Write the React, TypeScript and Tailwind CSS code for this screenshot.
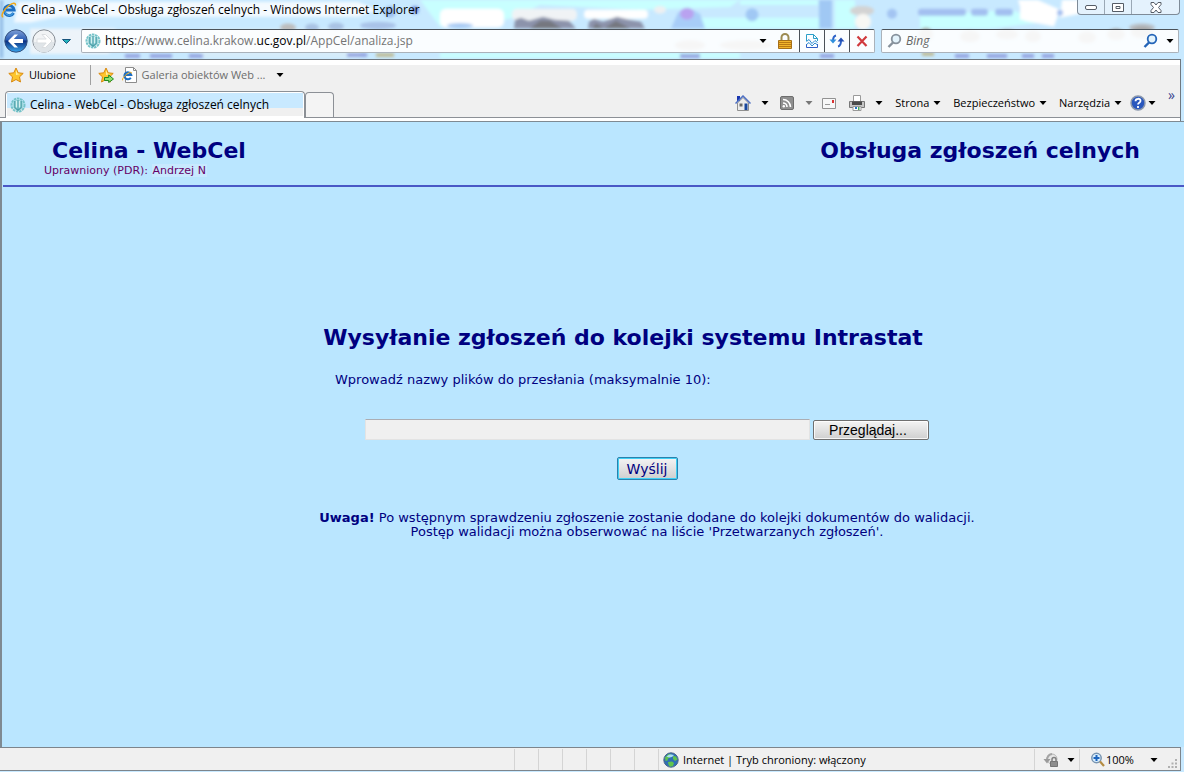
import { useState } from 'react';

const separators = [0, 1, 2, 3, 4, 5];

function Caret({ className = 'text-black' }: { className?: string }) {
  return (
    <svg className={`h-1 w-2 shrink-0 ${className}`} viewBox="0 0 8 4" fill="currentColor">
      <path d="M0.5 0h7L4 4z" />
    </svg>
  );
}

function ExplorerIcon() {
  return (
    <svg className="h-4 w-4 shrink-0" viewBox="0 0 16 16" fill="none">
      <path d="M12.6 11a5 5 0 1 1 .6-3H5" stroke="#1d6fc4" strokeWidth="2.8" />
      <path d="M12.2 11.3a4.7 4.7 0 0 1-8.3-1.2" stroke="#53b2ea" strokeWidth="1" />
      <path d="M2.2 15C-1 14.500 3 7 8 3.500c3.500-2.500 6.800-3.200 6.500 0" stroke="#f0a818" strokeWidth="1.500" />
    </svg>
  );
}

function EmblemIcon() {
  return (
    <svg className="h-4 w-4 shrink-0" viewBox="0 0 16 16" fill="none">
      <circle cx="8" cy="8" r="6.500" stroke="#74c3c9" strokeWidth="2" strokeDasharray="2.500 0.700" />
      <circle cx="8" cy="8" r="5" fill="#a9dfe2" stroke="#93d0d4" strokeWidth="0.800" />
      <path d="M6.800 4v6M9.200 4v6" stroke="#e9f8f8" />
      <path d="M4.800 4v6.500L8 13.500l3.200-3V4M8 3v10" stroke="#4a9fa9" strokeWidth="1.200" />
    </svg>
  );
}

function PageIcon() {
  return (
    <svg className="h-4 w-4 shrink-0" viewBox="0 0 16 16" fill="none">
      <path d="M3.500.5h8l3 3v12h-11z" fill="#fff" stroke="#8c8c8c" />
      <path d="M11.500.5v3h3" stroke="#8c8c8c" />
      <path d="M8.800 10.800A3.500 3.500 0 1 1 9.300 8H3.500" stroke="#1d6fc4" strokeWidth="2" />
      <path d="M1 13.500c-2-1 2-5.500 5.500-7.500 2-1 3.500-1 3 .5" stroke="#f0a818" />
    </svg>
  );
}

function StarIcon({ withArrow = false }: { withArrow?: boolean }) {
  return (
    <svg className="h-4 w-4 shrink-0" viewBox="0 0 16 16">
      <path
        d="m8 1 2.200 4.800 5 .6-3.700 3.500 1 5.100L8 12.500 3.500 15l1-5.100L.8 6.400l5-.6z"
        fill="#fdc62e"
        stroke="#d9880f"
      />
      <path d="m8 3 1.500 3.500 3 .4L8 8z" fill="#fff0a4" />
      {withArrow && (
        <path d="M6.500 10.500h4.200V8L15.500 12l-4.800 3.500V13.500H6.500z" fill="#8fe070" stroke="#1f8a21" />
      )}
    </svg>
  );
}

function BackIcon() {
  return (
    <svg className="h-6 w-6" viewBox="0 0 24 24">
      <defs>
        <linearGradient id="back" x1="0" y1="0" x2="0" y2="1">
          <stop offset="0" stopColor="#7f9fd6" />
          <stop offset="0.45" stopColor="#2a5db5" />
          <stop offset="0.5" stopColor="#0b2f80" />
          <stop offset="1" stopColor="#3aa7ee" />
        </linearGradient>
      </defs>
      <circle cx="12" cy="12" r="11.200" fill="url(#back)" stroke="#35507e" />
      <path d="M4 12l6.500-6.500h3.500L9.800 10H19v4H9.800l4.200 4.500h-3.500z" fill="#fff" />
    </svg>
  );
}

function ForwardIcon() {
  return (
    <svg className="h-6 w-6" viewBox="0 0 24 24">
      <circle cx="12" cy="12" r="11.200" fill="#f1f3f5" stroke="#858c94" />
      <path d="M1.500 13a10.500 10.500 0 0 0 21 0z" fill="#dfe4e8" />
      <path d="M20 12l-6.500-6.500H10l4.200 4.500H5v4h9.200L10 18.500h3.500z" fill="#fff" stroke="#dadde0" />
    </svg>
  );
}

function LockIcon() {
  return (
    <svg className="h-4 w-4" viewBox="0 0 16 16">
      <path d="M4.500 8V4.500a3.500 3.500 0 0 1 7 0V8" fill="none" stroke="#9c8b52" strokeWidth="2" />
      <path d="M1.500 7.500h13v8h-13z" fill="#f2b52c" stroke="#a5701a" />
      <path d="M2 9.500h12M2 11.500h12M2 13.500h12" stroke="#b97a14" />
    </svg>
  );
}

function CompatIcon() {
  return (
    <svg className="h-4 w-4" viewBox="0 0 16 16" fill="none">
      <path d="M2.500 8V1.500h7l4 4V8M9.500 1.500v4h4" stroke="#2a9fc9" />
      <path d="M2.500 11v3.500h11V11" stroke="#2e5fc5" />
      <path d="m2.500 8.500 2.500-2 3 4 3-3 2.500 2M2.500 11.500l2.500-2 3 3.500 3-3 2.500 2" stroke="#2d8cd0" />
    </svg>
  );
}

function RefreshIcon() {
  return (
    <svg className="h-4 w-4" viewBox="0 0 16 16" fill="none">
      <path d="M7 2.500C4.500 3 4 5 4 8M9 13.500c2.500-.5 3-2.500 3-6" stroke="#2c62c8" strokeWidth="2" />
      <path d="M.5 6.500h7L4 10.500z" fill="#2e8fdc" />
      <path d="M8.500 8.500h7L12 4.500z" fill="#2450b4" />
    </svg>
  );
}

function HomeIcon() {
  return (
    <svg className="h-4 w-4" viewBox="0 0 16 16">
      <path d="M2 1h3v5H2z" fill="#1935b0" />
      <path d="M2.500 8v7.500h11V8L8 2.500z" fill="#ececec" stroke="#8f8f8f" />
      <path d="M.5 8.500 8 1l7.500 7.500" fill="none" stroke="#4e70c4" strokeWidth="1.500" />
      <path d="M4.500 8.500h3v3h-3z" fill="#686868" />
      <path d="M9.500 8.500h3v6.500h-3z" fill="#18479e" />
    </svg>
  );
}

function FeedIcon() {
  return (
    <svg className="h-4 w-4" viewBox="0 0 16 16" fill="none">
      <rect x="1.500" y="1.500" width="13" height="13" rx="1.500" fill="#8f8f8f" stroke="#6d6d6d" />
      <path d="M4 4.500A7.500 7.500 0 0 1 11.500 12M4 8a4 4 0 0 1 4 4" stroke="#fff" strokeWidth="1.600" />
      <circle cx="4.800" cy="11.300" r="1.200" fill="#fff" />
    </svg>
  );
}

function MailIcon() {
  return (
    <svg className="h-4 w-4" viewBox="0 0 16 16">
      <path d="M1.500 3.500h13v10h-13z" fill="#f8f8f8" stroke="#929292" />
      <path d="M11 5h2v3h-2z" fill="#d93232" />
      <path d="M4 9.500h5" stroke="#9b9b9b" />
    </svg>
  );
}

function PrinterIcon() {
  return (
    <svg className="h-4 w-4" viewBox="0 0 16 16">
      <path d="M4.500.5h7V7h-7z" fill="#fff" stroke="#9a9a9a" />
      <path d="M.5 6.500h15v6H.5z" fill="#c5c5c5" stroke="#777" />
      <path d="M3 6.500h10v3.500H3z" fill="#4a4a4a" />
      <path d="M4 11.500h8v4H4z" fill="#fff" stroke="#999" />
      <path d="M6 12h2v2H6z" fill="#2577c8" />
      <path d="M9 12h1.500v3H9z" fill="#49a95b" />
    </svg>
  );
}

function HelpIcon() {
  return (
    <svg className="h-4 w-4" viewBox="0 0 16 16" fill="none">
      <circle cx="8" cy="8" r="7" fill="#2957bd" stroke="#8b98ad" strokeWidth="1.500" />
      <path d="M5.500 6.200C5.500 3 10.800 3 10.500 6c-.1 1.800-2.500 1.700-2.500 3.500M8 11v2" stroke="#fff" strokeWidth="1.800" />
    </svg>
  );
}

function GlassIcon({ flip = false, color = '#86919c' }: { flip?: boolean; color?: string }) {
  return (
    <svg className="h-4 w-4 shrink-0" viewBox="0 0 16 16" fill="none">
      {flip ? (
        <g>
          <circle cx="6.500" cy="6" r="4.700" fill="#d9efff" stroke="#7894b0" strokeWidth="1.500" />
          <path d="M6.500 3v6M3.500 6h6" stroke="#1d64bd" strokeWidth="2" />
          <path d="m10 9.500 4 4.500" stroke="#b48c42" strokeWidth="2.200" />
        </g>
      ) : (
        <g stroke={color}>
          <circle cx="10" cy="6" r="4.300" fill="#e3f3fc" strokeWidth="1.800" />
          <path d="m7 9.500-4.500 4.500" strokeWidth="2.400" />
        </g>
      )}
    </svg>
  );
}

function GlobeIcon() {
  return (
    <svg className="h-4 w-4 shrink-0" viewBox="0 0 16 16">
      <circle cx="8" cy="8" r="7.200" fill="#2f6eb5" stroke="#4b6788" />
      <path d="M2 5.500 5.500 2l3 .5-1 3-2.500 1-.5 2-2 .5zM10 4l3 .5 1.500 3L12 9l-2-2zM5 10l4-.5 2 1.500-1 3-3 .8-1.500-2z" fill="#60c54c" />
      <path d="M3.500 4.500C5.500 2 9 2 11 3l-2 2-3 .5z" fill="#a8ddf5" />
    </svg>
  );
}

function PrivacyIcon() {
  return (
    <svg className="h-4 w-4" viewBox="0 0 16 16" fill="none">
      <circle cx="9" cy="7" r="5" fill="#e6e6e6" stroke="#b5b5b5" />
      <path d="M4 8.500C4 5 6 2.500 9 2" stroke="#a5a5a5" strokeWidth="2" />
      <path d="M.5 7h7L4 11.500z" fill="#9b9b9b" />
      <path d="M7.500 9.500h7v5h-7z" fill="#8d8d8d" stroke="#747474" />
      <path d="M9 9.500v-2a2 2 0 0 1 4 0v2" stroke="#808080" strokeWidth="1.500" />
    </svg>
  );
}

// Blurred desktop seen through the glass window frame
function GlassBackdrop() {
  return (
    <svg className="absolute inset-0 h-full w-full" viewBox="0 0 1184 60" preserveAspectRatio="none">
      <defs>
        <filter id="soft">
          <feGaussianBlur stdDeviation="1.5" />
        </filter>
      </defs>
      <path d="M0 0h1184v60H0z" fill="#c8e9ff" />
      <g filter="url(#soft)">
        <path d="M420 0h320l-10 7-90 3-100-5-30 14-40 8h-30zM690 18h130v11H690zM740 0h78v5h-78zM835 0h20v29h-20zM920 16l90-6 40 12-60 7h-70zM440 54h300v5H440z" fill="#c8ffff" />
        <path d="M0 0h3v59H0z" fill="#8db7e2" />
        <path d="M18 2h340l20 8-20 7H60l-30 6H14z" fill="#f4faff" />
        <path d="M30 29h84l14 8-20 18H30z" fill="#edf4fa" />
        <path d="M200 29h160v30H200z" fill="#d6ecfa" />
        <rect x="440" y="9" width="64" height="19" rx="6" fill="#fff" />
        <rect x="512" y="9" width="65" height="12" rx="5" fill="#f0f3f5" />
        <rect x="584" y="10" width="64" height="9" rx="4" fill="#fff" />
        <path d="M1018 0h20l22 10-6 17-30-6zM1062 0h18v14l-20 4zM1020 8h30v12h-30z" fill="#fff" />
        <ellipse cx="660" cy="10" rx="6" ry="4" fill="#eef0f2" />
        <ellipse cx="862" cy="11" rx="12" ry="5" fill="#d3d3d3" />
        <ellipse cx="863" cy="22" rx="8" ry="8" fill="#f8f8f4" />
        <path d="m514 29 1-9 6-2 8 3 14-4 12 3 14 1 7 8zM588 29l1-7 5-3 9 3 14-5 12 3 12 2 4 7z" fill="#8c93ab" />
        <path d="m530 29 10-8 10 0 12 8zM592 29l4-5 8 5zM604 29l12-8 14 8z" fill="#74777f" />
        <path d="M671 29l7-16 10-5 12 6 5 15z" fill="#a8cdf8" />
        <ellipse cx="687" cy="14" rx="7" ry="6" fill="#b9a2f0" />
        <path d="M819 0h13v29h-13z" fill="#a0c8f4" />
        <circle cx="752" cy="15" r="6.500" fill="#a0c8f4" />
        <ellipse cx="460" cy="26" rx="13" ry="2.500" fill="#a9cbf4" />
        <rect x="918" y="9" width="48" height="7" rx="3" fill="#a3bff0" />
        <rect x="971" y="9" width="17" height="7" rx="3" fill="#a3bff0" />
        <rect x="995" y="9" width="18" height="7" rx="3" fill="#a3bff0" />
        <circle cx="892" cy="14" r="5" fill="#a3c4f2" />
        <circle cx="1060" cy="13" r="3" fill="#a3bff0" />
        <ellipse cx="288" cy="28" rx="8" ry="4" fill="#bdbdbd" />
        <ellipse cx="312" cy="28" rx="7" ry="4" fill="#a9c3e4" />
        <ellipse cx="336" cy="27" rx="8" ry="4" fill="#a9c3e4" />
        <ellipse cx="378" cy="26" rx="18" ry="4" fill="#a9c3e8" />
        <ellipse cx="1142" cy="28" rx="13" ry="4" fill="#b8bec4" />
        <path d="M125 55h15v4h-15zM150 55h22v4h-22zM189 55h14v4h-14zM347 54h20v4h-20zM680 55h20v4h-20zM820 55h14v4h-14zM955 55h14v4h-14zM987 55h20v4h-20zM1022 55h12v4h-12zM1042 55h12v4h-12z" fill="#94a4e0" />
        <path d="M376 54h18v4h-18zM922 53h12v4h-12z" fill="#c0bd9a" />
        <circle cx="415" cy="10" r="4" fill="#7795df" />
        <circle cx="390" cy="12" r="6" fill="#9cc0ef" />
        <g fill="#a8a8a8">
          <ellipse cx="690" cy="46" rx="15" ry="5" />
          <ellipse cx="746" cy="46" rx="26" ry="5" />
          <ellipse cx="926" cy="35" rx="7" ry="7" />
          <ellipse cx="970" cy="37" rx="10" ry="6" />
          <ellipse cx="1007" cy="35" rx="11" ry="5" />
          <ellipse cx="1033" cy="37" rx="8" ry="6" />
          <ellipse cx="1087" cy="38" rx="9" ry="6" />
          <ellipse cx="1116" cy="35" rx="9" ry="6" />
          <ellipse cx="1142" cy="33" rx="11" ry="6" />
        </g>
      </g>
    </svg>
  );
}

function WindowFrame() {
  return (
    <header className="relative shrink-0">
      <GlassBackdrop />
      <div className="relative flex h-[29px] items-start pl-px pr-1">
        <div className="flex flex-1 items-center gap-1 pt-0.5">
          <ExplorerIcon />
          <h1 className="text-[12px]">Celina - WebCel - Obsługa zgłoszeń celnych - Windows Internet Explorer</h1>
        </div>
        <div className="flex h-[15px] w-[103px] divide-x divide-[#9aa8b5] overflow-hidden rounded-b border border-t-0 border-[#7e8b98] bg-[#e4f2fd]">
          <button className="flex flex-1 items-center justify-center" aria-label="Minimalizuj">
            <span className="h-[5px] w-3 rounded-xs border border-[#555c66] bg-white" />
          </button>
          <button className="flex flex-1 items-center justify-center" aria-label="Maksymalizuj">
            <svg className="h-[9px] w-3" viewBox="0 0 12 9" fill="#fff" stroke="#555c66">
              <path d="M.5.5h11v8H.5zM4 3.500h4v2H4z" />
            </svg>
          </button>
          <button className="flex w-[47px] items-center justify-center" aria-label="Zamknij">
            <svg className="h-[11px] w-3" viewBox="0 0 12 11">
              <path d="M1 .5h3l2 2.500 2-2.500h3v2L8.500 5.500 11 8.500v2H8L6 8l-2 2.500H1v-2l2.500-3L1 2.500z" fill="#fff" stroke="#555c66" />
            </svg>
          </button>
        </div>
      </div>
      <div className="relative flex h-[30px] items-start pl-1 pr-[5px]">
        <button aria-label="Wstecz"><BackIcon /></button>
        <button className="ml-1" aria-label="Dalej"><ForwardIcon /></button>
        <button className="mt-2.5 ml-1.5 mr-2.5" aria-label="Ostatnie strony">
          <svg className="h-[5px] w-[9px]" viewBox="0 0 9 5"><path d="M.5.5h8l-4 4z" fill="#25b4bd" stroke="#17547c" /></svg>
        </button>
        <div className="flex h-6 flex-1 items-stretch rounded-xs border border-[#aab2ba] border-t-[#4b5259] bg-white/90">
          <div className="flex flex-1 items-center gap-1 pl-[3px]">
            <EmblemIcon />
            <div
              role="textbox"
              aria-label="Adres"
              contentEditable
              suppressContentEditableWarning
              className="flex-1 text-[12px] whitespace-nowrap text-[#747474] outline-none"
            >
              <span className="text-black">https</span>://www.celina.krakow.<span className="text-black">uc.gov.pl</span>/AppCel/analiza.jsp
            </div>
            <button aria-label="Historia adresów" className="px-1.5"><Caret /></button>
            <button className="mr-1.5" aria-label="Raport o zabezpieczeniach"><LockIcon /></button>
          </div>
          <button className="flex w-[25px] items-center justify-center border-l border-[#4b5259]" aria-label="Widok zgodności"><CompatIcon /></button>
          <button className="flex w-[25px] items-center justify-center border-l border-[#4b5259]" aria-label="Odśwież"><RefreshIcon /></button>
          <button className="flex w-[25px] items-center justify-center border-l border-[#4b5259]" aria-label="Zatrzymaj">
            <svg className="h-3 w-3" viewBox="0 0 12 12"><path d="m1.500 1.500 9 9.500M10.500 1.500l-9 9.500" stroke="#d03a3e" strokeWidth="2.200" /></svg>
          </button>
        </div>
        <div className="ml-1.5 flex h-6 w-[298px] items-center rounded-xs border border-[#aab2ba] border-t-[#4b5259] bg-white/90 pl-1">
          <GlassIcon />
          <input type="text" aria-label="Wyszukaj" placeholder="Bing" className="ml-1 min-w-0 flex-1 text-[12px] outline-none placeholder:text-[#666] placeholder:italic" />
          <button aria-label="Szukaj"><GlassIcon color="#2465b8" /></button>
          <button className="mr-1 ml-2" aria-label="Opcje wyszukiwania"><Caret /></button>
        </div>
      </div>
    </header>
  );
}

function CommandBar() {
  return (
    <div className="flex items-center pr-[5px] text-black">
      <button aria-label="Strona główna"><HomeIcon /></button>
      <button className="ml-2.5 flex h-4 items-center" aria-label="Opcje strony głównej"><Caret /></button>
      <button className="ml-2.5" aria-label="Źródła"><FeedIcon /></button>
      <button className="ml-2.5 flex h-4 items-center" aria-label="Opcje źródeł"><Caret className="text-[#777]" /></button>
      <button className="ml-2" aria-label="Poczta"><MailIcon /></button>
      <button className="ml-3" aria-label="Drukuj"><PrinterIcon /></button>
      <button className="ml-2.5 flex h-4 items-center" aria-label="Opcje drukowania"><Caret /></button>
      <button className="ml-3 flex items-center gap-1">Strona <Caret /></button>
      <button className="ml-3 flex items-center gap-1">Bezpieczeństwo <Caret /></button>
      <button className="ml-3 flex items-center gap-1">Narzędzia <Caret /></button>
      <button className="ml-2 flex items-center gap-0.5" aria-label="Pomoc"><HelpIcon /><Caret /></button>
      <button className="mb-4 ml-3 text-[14px] leading-3 text-[#37438f]" aria-label="Więcej">»</button>
    </div>
  );
}

function Toolbars() {
  return (
    <div className="shrink-0 bg-[#c8e9ff] pr-[3px]">
      <div className="border-t border-r border-[#6f7880] bg-white pt-[5px]">
        <div className="flex h-5 items-center bg-[#f0f0f0] pl-2">
          <button className="flex items-center gap-[5px]"><StarIcon />Ulubione</button>
          <span className="ml-3.5 h-5 border-l border-[#a0a0a0]" />
          <button className="ml-[7px]" aria-label="Dodaj do paska ulubionych"><StarIcon withArrow /></button>
          <button className="ml-2 flex items-center gap-1 text-[#6d6d6d]">
            <PageIcon />
            <span>Galeria obiektów Web ...</span>
            <Caret className="ml-1.5 text-black" />
          </button>
        </div>
        <div className="flex h-[33px] items-end border-b border-[#8c9096] bg-[#f0f0f0]">
          <div className="-mb-px ml-[5px] h-[27px] w-[300px] rounded-t border border-b-0 border-[#8c9096] bg-white p-px pb-0">
            <button className="flex h-[23px] w-full items-center gap-1 bg-linear-to-b from-[#c8e9ff] from-65% to-[#f0f0f0] to-65% pl-[3px]">
              <EmblemIcon />
              <span className="text-[12px] whitespace-nowrap">Celina - WebCel - Obsługa zgłoszeń celnych</span>
            </button>
          </div>
          <button className="h-[25px] w-[29px] rounded-t border border-b-0 border-[#8c9096] bg-[#f4f4f4]" aria-label="Nowa karta" />
          <div className="flex flex-1 justify-end"><CommandBar /></div>
        </div>
        <div className="h-[3px]" />
      </div>
    </div>
  );
}

function UploadForm() {
  const [fileName, setFileName] = useState('');

  return (
    <form className="flex flex-col items-center pt-[137px] pl-[107px] text-[13px]" onSubmit={e => e.preventDefault()}>
      <h2 className="pr-12 text-[22px] leading-7 font-bold">Wysyłanie zgłoszeń do kolejki systemu Intrastat</h2>
      <div className="mt-5 w-[624px]">
        <label htmlFor="file" className="block leading-4">Wprowadź nazwy plików do przesłania (maksymalnie 10):</label>
        <div className="mt-[31px] flex items-center gap-[3px] pl-[30px]">
          <input
            id="file"
            type="text"
            value={fileName}
            onChange={e => setFileName(e.target.value)}
            className="h-[21px] w-[445px] border border-[#e3e3e3] border-t-[#abadb3] bg-[#f0f0f0] px-1 outline-none"
          />
          <button
            type="button"
            className="flex h-5 w-[116px] items-center justify-center rounded-xs border border-[#707070] bg-linear-to-b from-[#f4f4f4] via-[#e2e2e2] to-[#cfcfcf] pr-1.5 font-['Liberation_Sans',sans-serif] text-[14px] text-black inset-ring inset-ring-white/80"
          >
            Przeglądaj...
          </button>
        </div>
      </div>
      <button
        type="submit"
        className="mt-[17px] flex h-[23px] w-[61px] items-center justify-center rounded-xs border border-[#2c81ac] bg-linear-to-b from-[#f4f4f4] via-[#e2e2e2] to-[#cfcfcf] text-[14px] inset-ring inset-ring-[#3fd0f5]"
      >
        Wyślij
      </button>
      <p className="mt-[31px] text-center leading-[14px]">
        <b>Uwaga!</b> Po wstępnym sprawdzeniu zgłoszenie zostanie dodane do kolejki dokumentów do walidacji.
        <br />
        Postęp walidacji można obserwować na liście 'Przetwarzanych zgłoszeń'.
      </p>
    </form>
  );
}

function StatusBar() {
  return (
    <footer className="shrink-0 bg-[#c8e9ff] pr-[3px] pb-px">
      <div className="flex h-6 items-stretch border-y border-r border-[#7d858c] bg-[#f0f0f0] pt-px">
        <div className="flex flex-1 justify-end">
          {separators.map(i => (
            <span key={i} className="w-6 border-l border-[#d4d4d4]" />
          ))}
        </div>
        <div className="flex w-[376px] items-center gap-1 border-l border-[#d4d4d4] pl-1">
          <GlobeIcon />
          Internet | Tryb chroniony: włączony
        </div>
        <button className="flex w-[45px] items-center gap-2 border-l border-[#d4d4d4] pl-2" aria-label="Prywatność">
          <PrivacyIcon />
          <Caret />
        </button>
        <button className="flex w-[89px] items-center border-l border-[#d4d4d4] pl-2.5">
          <GlassIcon flip />
          <span>100%</span>
          <Caret className="ml-4" />
        </button>
        <svg className="mt-2.5 mr-0.5 h-2.5 w-2.5 self-start" viewBox="0 0 10 10" fill="#b0b0b0">
          <path d="M7 0h2v2H7zM7 3.500h2v2H7zM7 7h2v2H7zM3.500 3.500h2v2h-2zM3.500 7h2v2h-2zM0 7h2v2H0z" />
        </svg>
      </div>
    </footer>
  );
}

export default function App() {
  return (
    <div className="flex h-screen flex-col overflow-hidden font-['Open_Sans',sans-serif] text-[11px] leading-4 text-black">
      <WindowFrame />
      <Toolbars />
      <main className="min-h-0 flex-1 border-t border-l-2 border-t-[#7f8a92] border-l-[#7f8a92] bg-[#bae6ff] pl-px font-['DejaVu_Sans',Verdana,sans-serif] text-[#000080]">
        <div className="flex items-start justify-between border-b-2 border-[#4a58c6] pt-[15px] pr-11 pb-2 pl-[41px]">
          <div>
            <h2 className="pl-2 text-[22px] leading-7 font-bold">Celina - WebCel</h2>
            <p className="text-[11px] leading-3 text-[#660066]">
              Uprawniony (PDR): <span className="bg-[#c8e9ff] px-px">Andrzej N</span>
            </p>
          </div>
          <h2 className="text-[22px] leading-7 font-bold">Obsługa zgłoszeń celnych</h2>
        </div>
        <UploadForm />
      </main>
      <StatusBar />
    </div>
  );
}
